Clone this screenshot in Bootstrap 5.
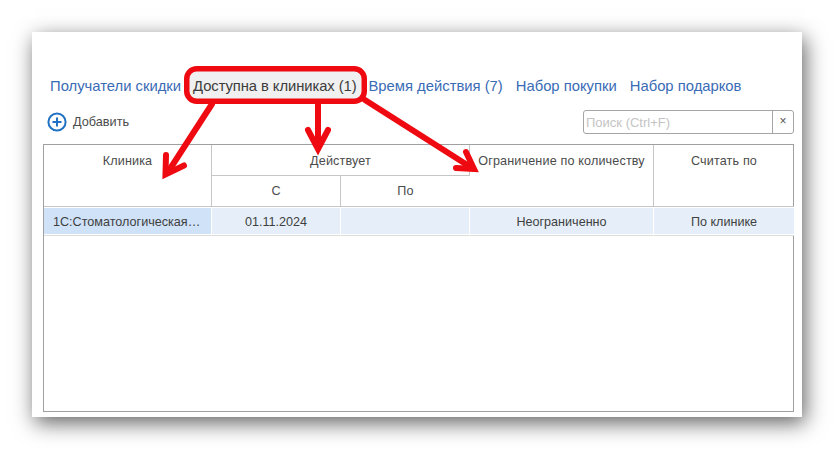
<!DOCTYPE html>
<html lang="ru">
<head>
<meta charset="utf-8">
<title>Скидка</title>
<link href="https://cdn.jsdelivr.net/npm/bootstrap@5.3.0/dist/css/bootstrap.min.css" rel="stylesheet">
<style>
html,body{background:#fff;height:449px;overflow:hidden;}
body{font-family:"Liberation Sans",Arial,sans-serif;color:#4b4b4b;padding:32px 32px 0;}
.sheet{position:relative;width:770px;height:385px;background:#fff;box-shadow:3px 6px 20px rgba(0,0,0,.62);padding:36px 8px 5px 11px;}
.tabrow{height:37px;padding-left:7px;font-size:14.8px;gap:13px;}
.tabrow span{color:#3a6bb5;white-space:nowrap;}
.tabrow .tab-on{color:#3c3c3c;background:#f0f0f0;border-radius:6px;padding:4px 5px;margin:0 -6px;letter-spacing:-.08px;}
.toolrow{height:39px;padding-left:4px;padding-bottom:5px;font-size:12.7px;}
.addlabel{color:#4b4b4b;margin:2px 0 0 6px;}
.searchbox{width:211px;height:24px;border:1px solid #a5a5a5;border-radius:3px;font-size:13px;color:#c4c4c4;}
.searchbox .q{padding-left:2px;border-right:1px solid #a5a5a5;line-height:24px;}
.searchbox .x{width:20px;color:#555;font-size:12px;line-height:20px;text-align:center;}
.gridbox{height:268px;border:1px solid #a0a0a0;font-size:12.6px;}
.gridtbl{table-layout:fixed;width:750px;border-collapse:separate;border-spacing:0;}
.gridtbl th{font-weight:400;text-align:center;vertical-align:top;color:#4b4b4b;border-right:1px solid #c6c6c6;border-bottom:1px solid #c6c6c6;padding:7px 2px 0;white-space:nowrap;letter-spacing:.15px;}
.gridtbl tr + tr th{padding-top:6px;}
.gridtbl th:last-child,.gridtbl td:last-child{border-right:0;}
.gridtbl .hcell{height:31px;}
.gridtbl td{height:29px;border-top:1px solid #fff;background:#e6eff9;border-right:1px solid #fff;border-bottom:1px solid #dcdcdc;box-shadow:inset 0 -1px 0 #fff;text-align:center;color:#3f3f3f;padding:1px 4px 0;vertical-align:middle;}
.gridtbl td.cur{background:#cfe2f7;text-align:left;padding:1px 10px 0 9px;white-space:nowrap;overflow:hidden;text-overflow:ellipsis;}
.marks{position:absolute;left:0;top:0;pointer-events:none;}
</style>
</head>
<body>
<div class="sheet">
  <div class="tabrow d-flex align-items-center">
    <span>Получатели скидки</span>
    <span class="tab-on">Доступна в клиниках (1)</span>
    <span>Время действия (7)</span>
    <span>Набор покупки</span>
    <span>Набор подарков</span>
  </div>
  <div class="toolrow d-flex align-items-center justify-content-between">
    <div class="d-flex align-items-center">
      <svg width="20" height="20" viewBox="0 0 20 20"><circle cx="10" cy="10" r="8.600" fill="#fff" stroke="#1f72c4" stroke-width="2"/><path d="M5.500 10h9M10 5.500v9" stroke="#1f72c4" stroke-width="2" fill="none"/></svg>
      <span class="addlabel">Добавить</span>
    </div>
    <div class="searchbox d-flex">
      <div class="q flex-grow-1">Поиск (Ctrl+F)</div>
      <div class="x">×</div>
    </div>
  </div>
  <div class="gridbox">
    <table class="gridtbl">
      <colgroup><col style="width:168px"><col style="width:129px"><col style="width:129px"><col style="width:184px"><col style="width:140px"></colgroup>
      <thead>
        <tr><th class="hcell" rowspan="2">Клиника</th><th class="hcell" colspan="2">Действует</th><th class="hcell" rowspan="2">Ограничение по количеству</th><th class="hcell" rowspan="2">Считать по</th></tr>
        <tr><th class="hcell">С</th><th class="hcell">По</th></tr>
      </thead>
      <tbody>
        <tr><td class="cur">1С:Стоматологическая клиника</td><td>01.11.2024</td><td></td><td>Неограниченно</td><td>По клинике</td></tr>
      </tbody>
    </table>
  </div>
</div>
<svg class="marks" width="834" height="449" viewBox="0 0 834 449" fill="none">
  <g stroke="#ee0a10" stroke-linecap="round" stroke-linejoin="miter" stroke-miterlimit="8">
    <rect x="186.750" y="68.750" width="177.500" height="32.500" rx="10" stroke-width="5.500"/>
    <g stroke-width="6">
      <path d="M212 104 168 172"/><path d="M166 155 165.500 174.500 184 165.500"/>
      <path d="M318 104V148"/><path d="M308 130 318 149 328 130"/>
      <path d="M365 100 472 168"/><path d="M466 152 474 169 456 168"/>
    </g>
  </g>
</svg>
<script src="https://cdn.jsdelivr.net/npm/bootstrap@5.3.0/dist/js/bootstrap.bundle.min.js"></script>
</body>
</html>
